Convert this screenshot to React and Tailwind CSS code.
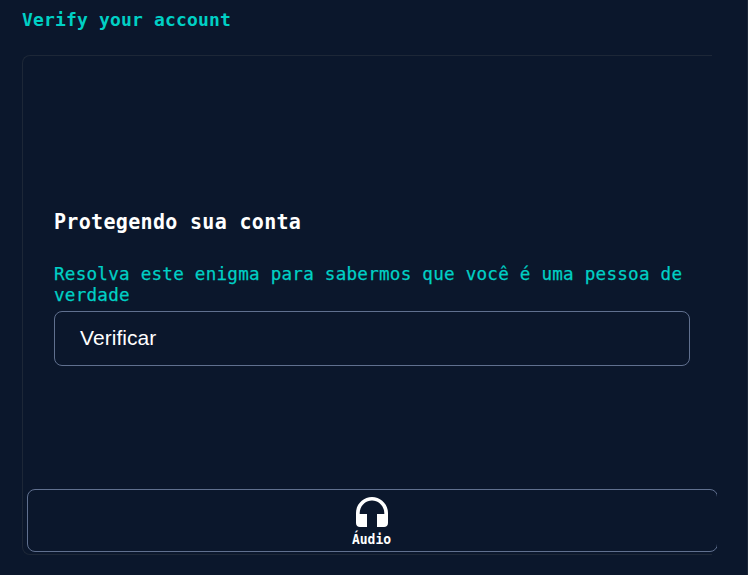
export default function App() {
  return (
    <div className="flex h-[575px] w-[748px] flex-col overflow-hidden border-r border-[#1b2638] bg-[#0b172c] pl-[22px] font-['DejaVu_Sans_Mono','Liberation_Mono',monospace]">
      <h1 className="h-[55px] pt-2 text-[18px] leading-6 font-bold tracking-[0.17px] text-[#00d0c5]">Verify your account</h1>
      <section className="flex h-[500px] w-[690px] flex-col rounded-l-lg border border-r-0 border-[#1d2737]">
        <div className="ml-[31px] flex h-[433px] w-[636px] flex-col pt-[152px]">
          <h2 className="h-[56px] origin-[0_22px] scale-y-[1.06] text-[20px] leading-[29px] font-bold tracking-[0.32px] text-white">Protegendo sua conta</h2>
          <p className="mb-[5px] text-[17.6px] leading-[21px] tracking-[0.24px] whitespace-nowrap text-[#00d0c5] [-webkit-text-stroke:0.25px_#00d0c5]">
            Resolva este enigma para sabermos que você é uma pessoa de
            <br />
            verdade
          </p>
          <button className="h-[55px] shrink-0 rounded-lg border border-[#60708f] pb-[2px] pl-[25px] text-left font-['Liberation_Sans',Arial,sans-serif] text-[21px] tracking-[0.06px] text-white">Verificar</button>
        </div>
        <div className="ml-1 w-[690px] overflow-hidden">
          <button className="flex h-[63px] w-[691px] flex-col items-center rounded-lg border border-[#60708f] pt-[7px] pr-[2px] text-white">
            <svg className="h-[30px] w-[32px] shrink-0" viewBox="0 0 32 30" fill="currentColor">
              <path d="M16 0C7.2 0 0 7.2 0 16v10c0 2.4 1.6 4 4 4h7V17H3.7v-1C3.7 9.2 9.2 3.4 16 3.4S28.3 9.2 28.3 16v1H21v13h7c2.4 0 4-1.6 4-4V16C32 7.2 24.8 0 16 0Z" />
            </svg>
            <span className="mt-[2px] shrink-0 origin-[50%_16px] scale-y-[1.12] text-[13px] leading-[22px] font-bold">Áudio</span>
          </button>
        </div>
      </section>
    </div>
  );
}
